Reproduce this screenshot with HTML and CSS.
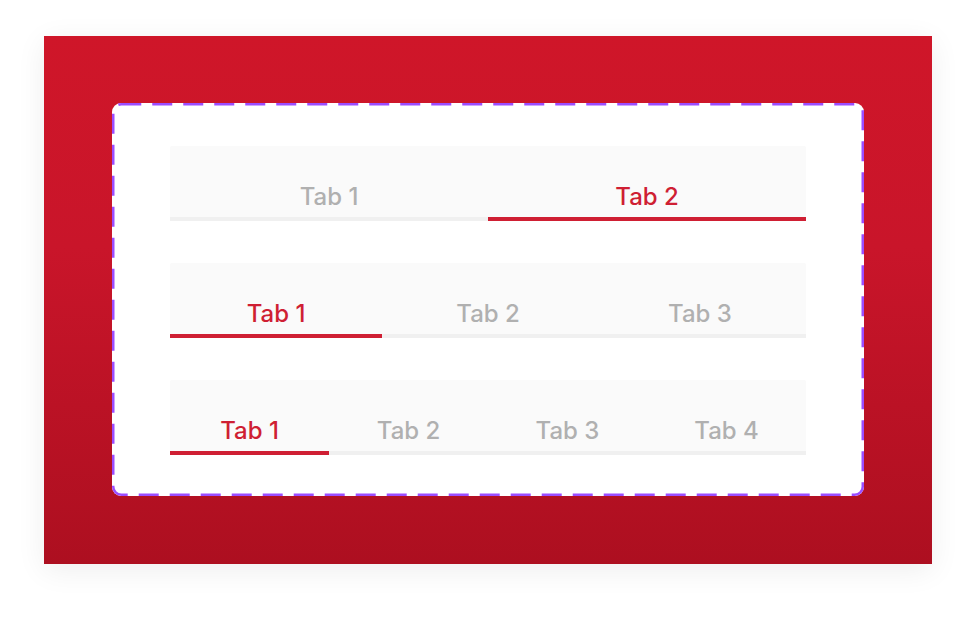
FILE: index.html
```html
<!DOCTYPE html>
<html>
<head>
<meta charset="utf-8">
<link rel="stylesheet" href="styles.css">
</head>
<body>
<div class="page">
  <div class="panel">
    <div class="card">
      <svg class="dash" width="752" height="393" viewBox="0 0 752 393" aria-hidden="true">
        <rect x="1.25" y="1.25" width="749.5" height="390.5" rx="8" ry="8" fill="none" stroke="#9b4dff" stroke-width="2.5" stroke-dasharray="20 11"/>
      </svg>
      <div class="tabs">
        <div class="tab">Tab 1</div>
        <div class="tab active">Tab 2</div>
      </div>
      <div class="tabs">
        <div class="tab active">Tab 1</div>
        <div class="tab">Tab 2</div>
        <div class="tab">Tab 3</div>
      </div>
      <div class="tabs">
        <div class="tab active">Tab 1</div>
        <div class="tab">Tab 2</div>
        <div class="tab">Tab 3</div>
        <div class="tab">Tab 4</div>
      </div>
    </div>
  </div>
</div>
</body>
</html>
```
FILE: styles.css
```css
html, body {
  margin: 0;
  padding: 0;
  background: #ffffff;
}
body {
  font-family: Inter, Roboto, "Liberation Sans", sans-serif;
}
.page {
  padding: 36px 44px;
}
.panel {
  width: 888px;
  height: 528px;
  box-sizing: border-box;
  padding: 67px 68px 68px 68px;
  background: linear-gradient(180deg, #cf1629 0%, #c9152a 40%, #ad0f20 100%);
  box-shadow: 0 6px 28px rgba(0, 0, 0, 0.07);
}
.card {
  position: relative;
  height: 393px;
  box-sizing: border-box;
  background: #ffffff;
  border-radius: 9px;
  padding: 43px 58px 41px 58px;
  display: flex;
  flex-direction: column;
  gap: 42px;
}
.dash {
  position: absolute;
  left: 0;
  top: 0;
}
.tabs {
  display: flex;
  background: #fafafa;
  border-radius: 2px 2px 0 0;
}
.tab {
  flex: 1;
  text-align: center;
  font-size: 24px;
  font-weight: 500;
  line-height: 24px;
  padding: 39px 0 8px 0;
  color: #b0b0b0;
  border-bottom: 4px solid #f0f0f0;
}
.tab.active {
  color: #cf1f33;
  border-bottom-color: #cf1f33;
}
```
